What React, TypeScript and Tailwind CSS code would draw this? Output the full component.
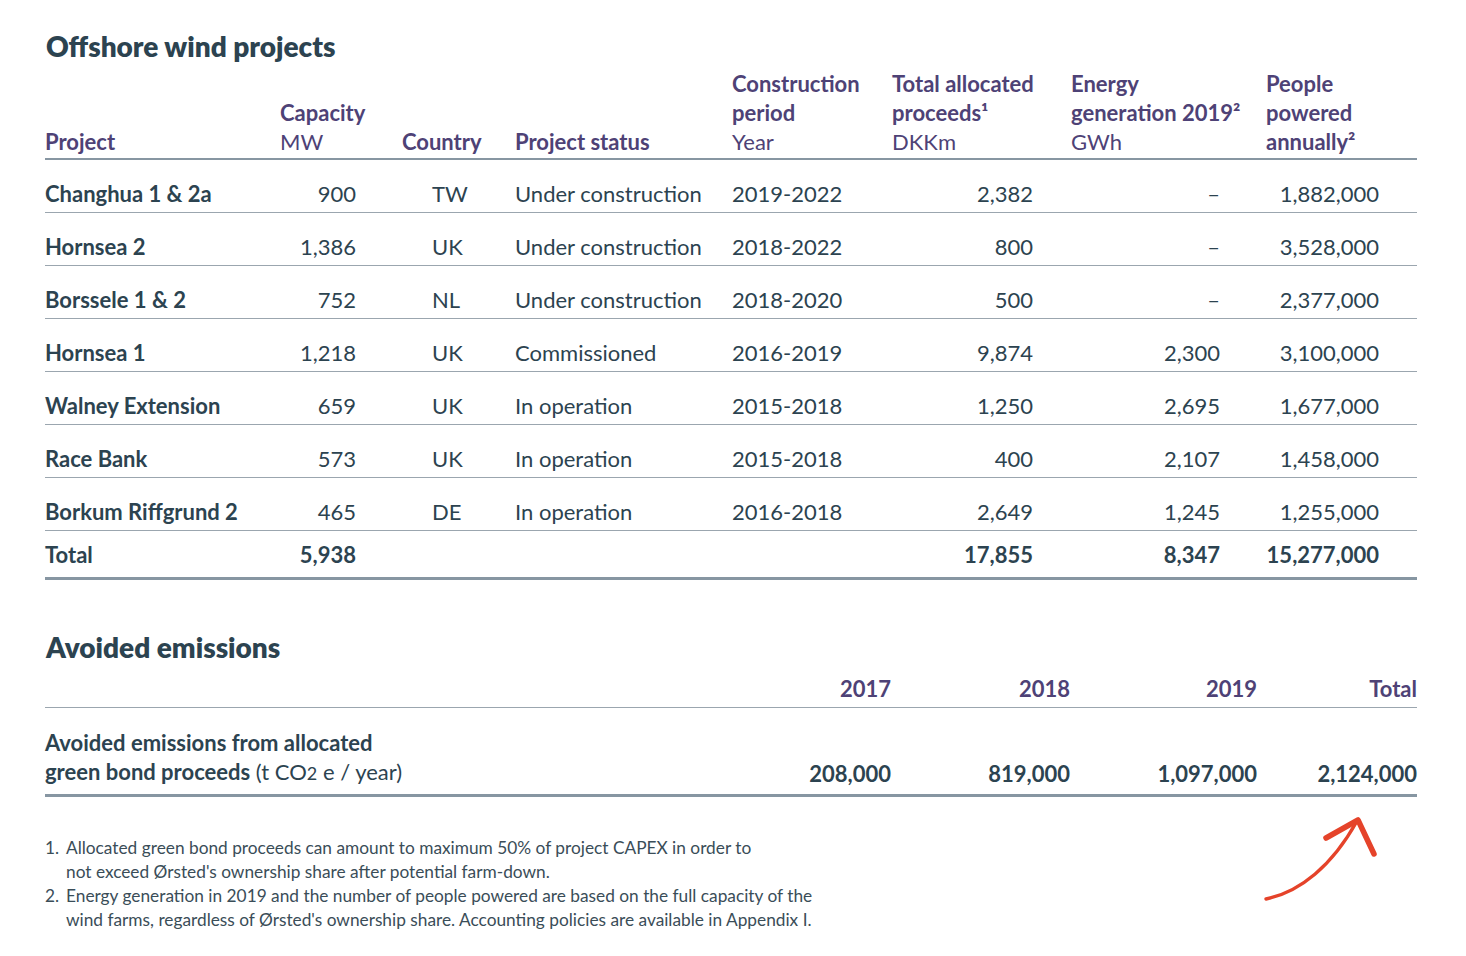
import React from 'react';

const dark = 'text-[#2c4350]';
const purple = 'text-[#4e4276]';

type Row = {
  name: string;
  mw: string;
  country: string;
  status: string;
  period: string;
  proceeds: string;
  energy: string;
  people: string;
};

const rows: Row[] = [
  { name: 'Changhua 1 & 2a', mw: '900', country: 'TW', status: 'Under construction', period: '2019-2022', proceeds: '2,382', energy: '–', people: '1,882,000' },
  { name: 'Hornsea 2', mw: '1,386', country: 'UK', status: 'Under construction', period: '2018-2022', proceeds: '800', energy: '–', people: '3,528,000' },
  { name: 'Borssele 1 & 2', mw: '752', country: 'NL', status: 'Under construction', period: '2018-2020', proceeds: '500', energy: '–', people: '2,377,000' },
  { name: 'Hornsea 1', mw: '1,218', country: 'UK', status: 'Commissioned', period: '2016-2019', proceeds: '9,874', energy: '2,300', people: '3,100,000' },
  { name: 'Walney Extension', mw: '659', country: 'UK', status: 'In operation', period: '2015-2018', proceeds: '1,250', energy: '2,695', people: '1,677,000' },
  { name: 'Race Bank', mw: '573', country: 'UK', status: 'In operation', period: '2015-2018', proceeds: '400', energy: '2,107', people: '1,458,000' },
  { name: 'Borkum Riffgrund 2', mw: '465', country: 'DE', status: 'In operation', period: '2016-2018', proceeds: '2,649', energy: '1,245', people: '1,255,000' },
];

const cols = 'grid grid-cols-[235px_122px_113px_217px_160px_179px_195px_151px]';

const Arrow = () => (
  <svg className="absolute left-[1258px] top-[810px]" width="130" height="100" viewBox="1258 810 130 100" fill="none">
    <path d="M1266 899 C1300 892 1332 866 1357 821" stroke="#e5432a" strokeWidth="3.4" strokeLinecap="round" />
    <path d="M1326 838 L1358 820 L1374 854" stroke="#e5432a" strokeWidth="5.5" strokeLinecap="round" strokeLinejoin="round" />
  </svg>
);

export default function App() {
  return (
    <div className="relative w-[1466px] h-[956px] bg-white pl-[45px] pr-[49px] font-['Lato',sans-serif]">
      <h1 className={`pt-[29px] pl-[1px] text-[28px] leading-[34px] font-extrabold ${dark}`}>Offshore wind projects</h1>

      {/* header */}
      <div className={`${cols} mt-[6px] pb-[2px] items-end border-b-2 border-[#8796a2] text-[22px] leading-[29px] ${purple}`}>
        <div className="font-bold">Project</div>
        <div>
          <div className="font-bold">Capacity</div>
          <div>MW</div>
        </div>
        <div className="font-bold">Country</div>
        <div className="font-bold">Project status</div>
        <div>
          <div className="font-bold">Construction</div>
          <div className="font-bold">period</div>
          <div>Year</div>
        </div>
        <div>
          <div className="font-bold whitespace-nowrap">Total allocated</div>
          <div className="font-bold">proceeds¹</div>
          <div>DKKm</div>
        </div>
        <div>
          <div className="font-bold">Energy</div>
          <div className="font-bold whitespace-nowrap">generation 2019²</div>
          <div>GWh</div>
        </div>
        <div className="font-bold">
          <div>People</div>
          <div>powered</div>
          <div>annually²</div>
        </div>
      </div>

      {/* rows */}
      {rows.map((r) => (
        <div key={r.name} className={`${cols} h-[53px] items-end pb-[4px] border-b border-[#9ba6af] text-[22px] leading-[28px] ${dark}`}>
          <div className="font-bold">{r.name}</div>
          <div className="text-right pr-[46px]">{r.mw}</div>
          <div className="pl-[30px]">{r.country}</div>
          <div>{r.status}</div>
          <div>{r.period}</div>
          <div className="text-right pr-[38px]">{r.proceeds}</div>
          <div className="text-right pr-[46px]">{r.energy}</div>
          <div className="text-right pr-[38px]">{r.people}</div>
        </div>
      ))}

      <div className={`${cols} h-[49px] items-end pb-[8px] border-b-[3px] border-[#8796a2] text-[22px] leading-[28px] font-bold ${dark}`}>
        <div>Total</div>
        <div className="text-right pr-[46px]">5,938</div>
        <div />
        <div />
        <div />
        <div className="text-right pr-[38px]">17,855</div>
        <div className="text-right pr-[46px]">8,347</div>
        <div className="text-right pr-[38px]">15,277,000</div>
      </div>

      {/* avoided emissions */}
      <h2 className={`mt-[50px] pl-[1px] text-[28px] leading-[34px] font-extrabold ${dark}`}>Avoided emissions</h2>

      <div className={`grid grid-cols-[666px_180px_179px_187px_160px] mt-[11px] pb-[4px] border-b border-[#9ba6af] text-[22px] leading-[28px] font-bold ${purple}`}>
        <div />
        <div className="text-right">2017</div>
        <div className="text-right">2018</div>
        <div className="text-right">2019</div>
        <div className="text-right">Total</div>
      </div>

      <div className={`grid grid-cols-[666px_180px_179px_187px_160px] items-end pt-[20px] pb-[6px] border-b-[3px] border-[#8796a2] text-[22px] leading-[29px] ${dark}`}>
        <div>
          <div className="font-bold">Avoided emissions from allocated</div>
          <div>
            <span className="font-bold">green bond proceeds</span> (t CO<span className="text-[18px]">2</span> e / year)
          </div>
        </div>
        <div className="text-right font-bold">208,000</div>
        <div className="text-right font-bold">819,000</div>
        <div className="text-right font-bold">1,097,000</div>
        <div className="text-right font-bold">2,124,000</div>
      </div>

      <ol className="mt-[39px] text-[17.3px] leading-[24px] text-[#3a4d58]">
        <li className="flex">
          <span className="w-[21px] shrink-0">1.</span>
          <span>
            Allocated green bond proceeds can amount to maximum 50% of project CAPEX in order to
            <br />
            not exceed Ørsted's ownership share after potential farm-down.
          </span>
        </li>
        <li className="flex">
          <span className="w-[21px] shrink-0">2.</span>
          <span>
            Energy generation in 2019 and the number of people powered are based on the full capacity of the
            <br />
            wind farms, regardless of Ørsted's ownership share. Accounting policies are available in Appendix I.
          </span>
        </li>
      </ol>

      <Arrow />
    </div>
  );
}
